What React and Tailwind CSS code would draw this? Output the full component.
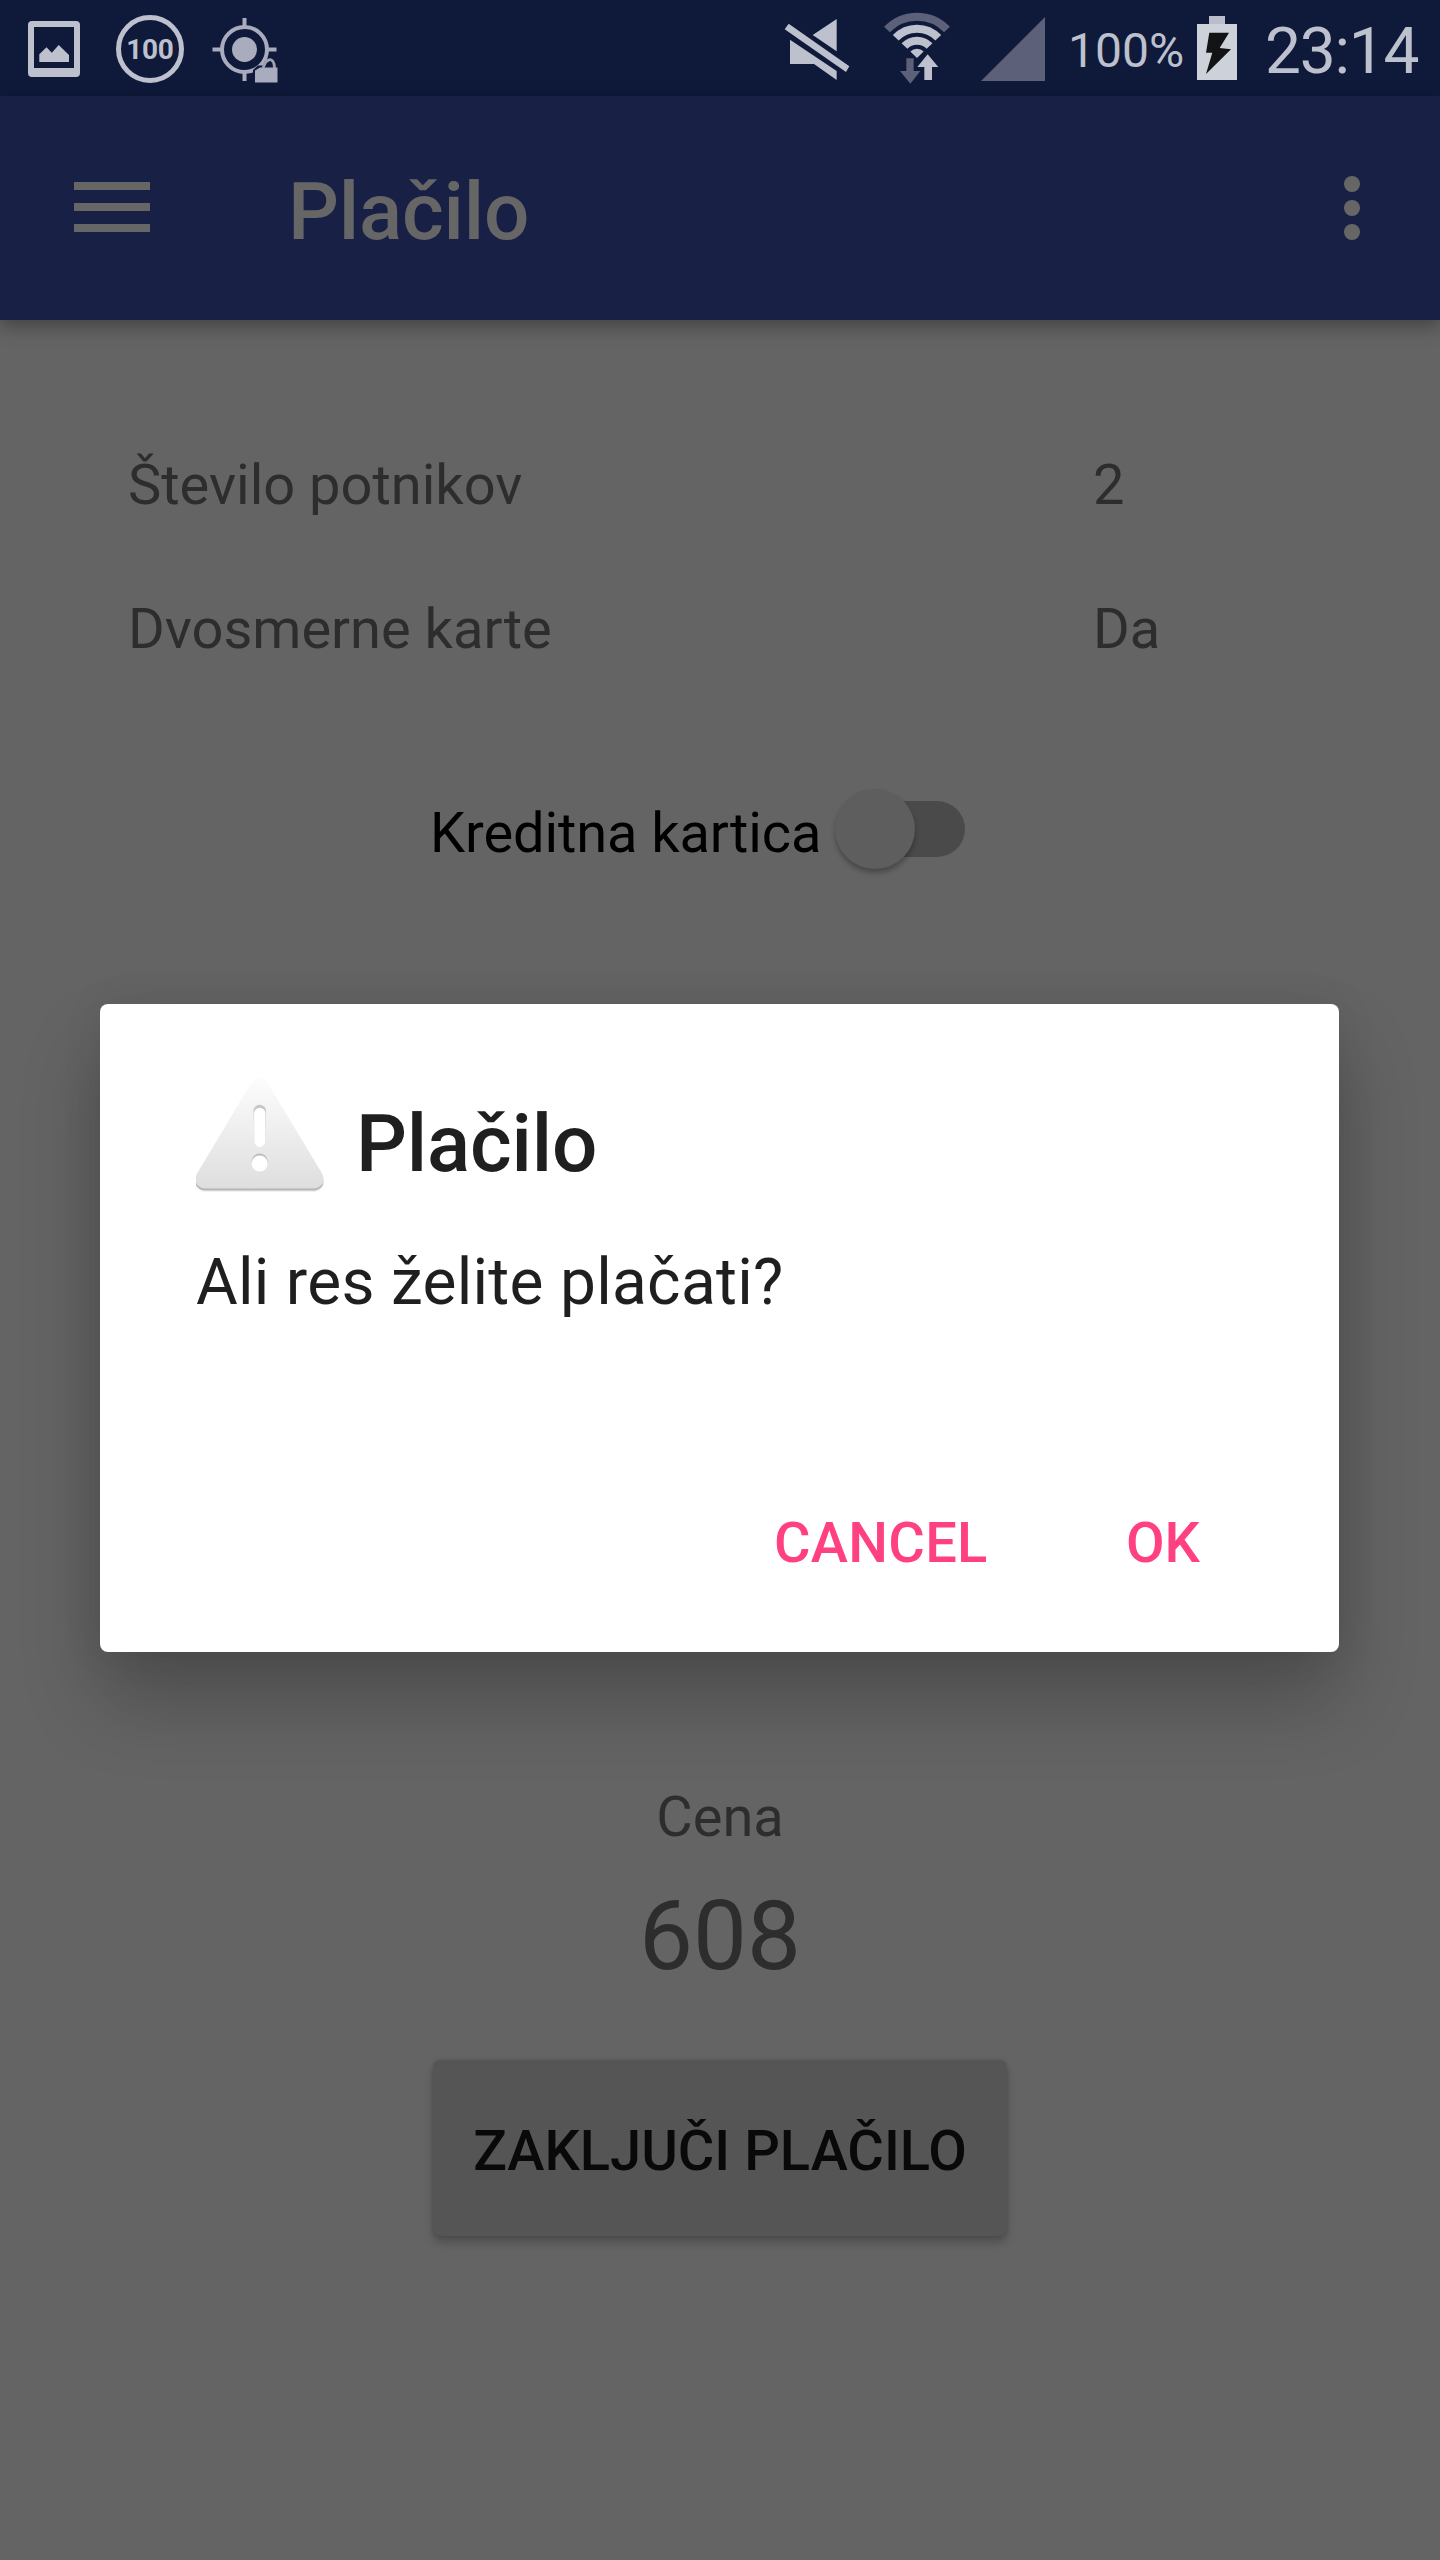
import React from "react";

function PictureIcon() {
  return (
    <svg className="ml-7 mt-[21px] h-14 w-[52px] shrink-0" viewBox="0 0 52 56" fill="#bdc0cd">
      <path fillRule="evenodd" d="M4 0H48a4 4 0 0 1 4 4V52a4 4 0 0 1-4 4H4a4 4 0 0 1-4-4V4a4 4 0 0 1 4-4ZM6 6V47H46V6Z" />
      <path d="M11.3 41V33.3L18.5 26.3L23.8 31.8L30.7 24L41 34V41Z" />
    </svg>
  );
}

function BatteryLevelIcon() {
  return (
    <div className="ml-9 mt-[15px] flex h-[68px] w-[68px] shrink-0 items-center justify-center rounded-full border-[5px] border-[#bdc0cd] pt-px text-[28px] leading-none font-bold tracking-[-0.3px] text-[#bdc0cd]">
      100
    </div>
  );
}

function LocationLockIcon() {
  return (
    <svg className="ml-7 mt-[17px] h-[66px] w-[68px] shrink-0" viewBox="0 0 68 66">
      <circle cx="32.5" cy="32.5" r="22.5" fill="none" stroke="#a9acbc" strokeWidth="4" />
      <circle cx="32.5" cy="32.5" r="12.5" fill="#a9acbc" />
      <path d="M32.5 1V9M32.5 56V64M0.5 32.5H10M55 32.5H64.5" stroke="#a9acbc" strokeWidth="4" />
      <path d="M41 66V53L46 48.500H51L53 44L61 43L66 49V66Z" fill="#0f193a" />
      <path d="M51 51L53.500 45.500Q57.500 40.500 61 44.500Q62.500 46.500 62.500 51" fill="none" stroke="#9ea2b3" strokeWidth="2.800" />
      <path d="M43 65.500V53.500L48 50.500H65.500V65.500Z" fill="#a9acbc" />
    </svg>
  );
}

function MuteIcon() {
  return (
    <svg className="ml-[504px] mt-[19px] h-[62px] w-[66px] shrink-0" viewBox="72 57 198 186" fill="#bdc0cd">
      <path d="M230 57V154L158 105Z" />
      <path d="M74 88L86 71L268 199L258 216Z" />
      <path d="M90 119L230 213V240L162 192H90Z" />
    </svg>
  );
}

function WifiIcon() {
  return (
    <svg className="ml-[33px] mt-3 h-[72px] w-[68px] shrink-0" viewBox="369 36 204 216">
      <g fill="none" strokeWidth="24">
        <path d="M381 88.700A124 124 0 0 1 561 88.700" stroke="#5c6079" />
        <path d="M407.200 113.500A88 88 0 0 1 534.800 113.500" stroke="#bdc0cd" />
        <path d="M433.300 138.200A52 52 0 0 1 508.700 138.200" stroke="#bdc0cd" />
      </g>
      <path d="M471 174L451 154.700A28 28 0 0 1 491 154.700Z" fill="#bdc0cd" />
      <path d="M439 175H461V213H481L451 251L420 213H439Z" fill="#5c6079" />
      <path d="M503 163L535 201H516V240H493V201H472Z" fill="#bdc0cd" />
    </svg>
  );
}

function SignalIcon() {
  return (
    <svg className="ml-[30px] mt-[17px] h-16 w-16 shrink-0" viewBox="0 0 64 64">
      <path d="M0 64L64 0V64Z" fill="#5c6079" />
    </svg>
  );
}

function ChargingIcon() {
  return (
    <svg className="mt-4 h-16 w-10 shrink-0" viewBox="0 0 40 64">
      <rect x="12" y="0" width="16" height="8" fill="#babdcb" />
      <rect x="0" y="8" width="40" height="56" fill="#cdd1d9" />
      <path d="M12.300 16.700H32L22.700 32L34 33.300L9 58L15.300 36.700H9Z" fill="#111314" />
    </svg>
  );
}

function StatusBar() {
  return (
    <div className="flex h-24 items-start bg-[#0f193a] text-[#bdc0cd]">
      <PictureIcon />
      <BatteryLevelIcon />
      <LocationLockIcon />
      <MuteIcon />
      <WifiIcon />
      <SignalIcon />
      <span className="mt-[23px] ml-[23px] w-[129px] shrink-0 text-[48px] leading-[56px] whitespace-nowrap">100%</span>
      <ChargingIcon />
      <span className="mt-3 ml-[28px] shrink-0 text-[64px] leading-[80px] tracking-[-1.2px] whitespace-nowrap">23:14</span>
    </div>
  );
}

function Toolbar() {
  return (
    <header className="flex h-56 items-start bg-[#182045] text-[#666666] shadow-[0_6px_18px_rgba(0,0,0,0.35)]">
      <button aria-label="Menu" className="mt-[86px] ml-[74px] flex w-[76px] shrink-0 flex-col gap-[13px]">
        <span className="h-2 w-full bg-[#666666]" />
        <span className="h-2 w-full bg-[#666666]" />
        <span className="h-2 w-full bg-[#666666]" />
      </button>
      <h1 className="mt-[68px] ml-[138px] text-[80px] leading-[96px] font-medium tracking-[-0.2px]">Plačilo</h1>
      <button aria-label="More" className="mt-20 mr-20 ml-auto flex flex-col gap-2">
        <span className="size-4 rounded-full bg-[#666666]" />
        <span className="size-4 rounded-full bg-[#666666]" />
        <span className="size-4 rounded-full bg-[#666666]" />
      </button>
    </header>
  );
}

function DetailRow({ label, value }) {
  return (
    <div className="flex h-36 pl-32 text-[56px] leading-[64px] text-[#2d2d2d]">
      <span className="w-[965px] shrink-0">{label}</span>
      <span>{value}</span>
    </div>
  );
}

function CardSwitch() {
  return (
    <div className="mt-12 flex h-24 pl-[430px]">
      <span className="mt-3 w-[405px] shrink-0 text-[56px] leading-[64px] tracking-[-0.1px] whitespace-nowrap text-black">Kreditna kartica</span>
      <div className="flex h-20 w-[130px] items-center">
        <div className="z-10 size-20 shrink-0 rounded-full bg-[#5e5e5e] shadow-[0_4px_5px_rgba(0,0,0,0.28)]" />
        <div className="-ml-16 h-14 w-[114px] shrink-0 rounded-full bg-[#4a4a4a]" />
      </div>
    </div>
  );
}

function WarningIcon() {
  return (
    <svg className="h-32 w-32 shrink-0" viewBox="0 0 128 128">
      <defs>
        <linearGradient id="warn" x1="0" y1="0" x2="0" y2="1">
          <stop offset="0" stopColor="#fdfdfd" />
          <stop offset="1" stopColor="#dedede" />
        </linearGradient>
      </defs>
      <path d="M54 12Q63.500 -3 73 12L126 101Q131 113 119 116H8Q-4 113 1 101Z" fill="#f0f0f0" />
      <path d="M54 10.500Q63.500 -4.500 73 10.500L126 99.500Q131 111.500 119 114.500H8Q-4 111.500 1 99.500Z" fill="#b4b4b4" />
      <path d="M54 9Q63.500 -6 73 9L126 97.500Q131 109.500 119 112.500H8Q-4 109.500 1 97.500Z" fill="url(#warn)" />
      <path d="M57.500 35A6.200 6.200 0 0 1 69.900 35L69 66Q63.700 72 58.400 66Z" fill="#c6c6c6" />
      <path d="M58 37.500A5.700 5.700 0 0 1 69.400 37.500L69 67Q63.700 75 58.400 67Z" fill="#ffffff" />
      <circle cx="63.7" cy="85.500" r="8" fill="#bebebe" />
      <circle cx="63.7" cy="87.500" r="8" fill="#ffffff" />
    </svg>
  );
}

function ConfirmDialog() {
  return (
    <section role="dialog" className="absolute top-[1004px] left-[100px] z-20 flex h-[648px] w-[1239px] flex-col rounded-lg bg-white text-[#1f1f1f] shadow-[0_48px_80px_rgba(0,0,0,0.24),0_0_40px_rgba(0,0,0,0.08)]">
      <div className="flex h-[239px] items-start pt-[72px] pl-24">
        <WarningIcon />
        <h2 className="mt-5 ml-8 text-[80px] leading-[96px] font-medium tracking-[-0.2px]">Plačilo</h2>
      </div>
      <p className="pl-24 text-[64px] leading-[80px] tracking-[0.28px]">Ali res želite plačati?</p>
      <div className="mt-[188px] flex pl-[674px] text-[56px] leading-[64px] font-medium text-[#ff4081]">
        <button className="w-[352px] text-left tracking-[0.3px]">CANCEL</button>
        <button>OK</button>
      </div>
    </section>
  );
}

export default function App() {
  return (
    <main className="relative h-[2560px] w-[1440px] overflow-hidden bg-[#646464] font-['Roboto',sans-serif]">
      <StatusBar />
      <Toolbar />
      <div className="pt-[133px]">
        <DetailRow label="Število potnikov" value="2" />
        <DetailRow label="Dvosmerne karte" value="Da" />
        <CardSwitch />
      </div>
      <div className="mt-[900px] flex flex-col items-center text-[#2d2d2d]">
        <span className="text-[56px] leading-[64px]">Cena</span>
        <span className="mt-[31px] text-[96px] leading-[112px]">608</span>
        <button className="mt-[68px] flex h-44 w-[574px] items-start justify-center rounded-lg bg-[#555555] pt-[59px] text-[56px] leading-[64px] font-medium whitespace-nowrap text-[#090909] shadow-[0_7px_8px_rgba(0,0,0,0.2),0_0_4px_rgba(0,0,0,0.15)]">
          ZAKLJUČI PLAČILO
        </button>
      </div>
      <ConfirmDialog />
    </main>
  );
}
